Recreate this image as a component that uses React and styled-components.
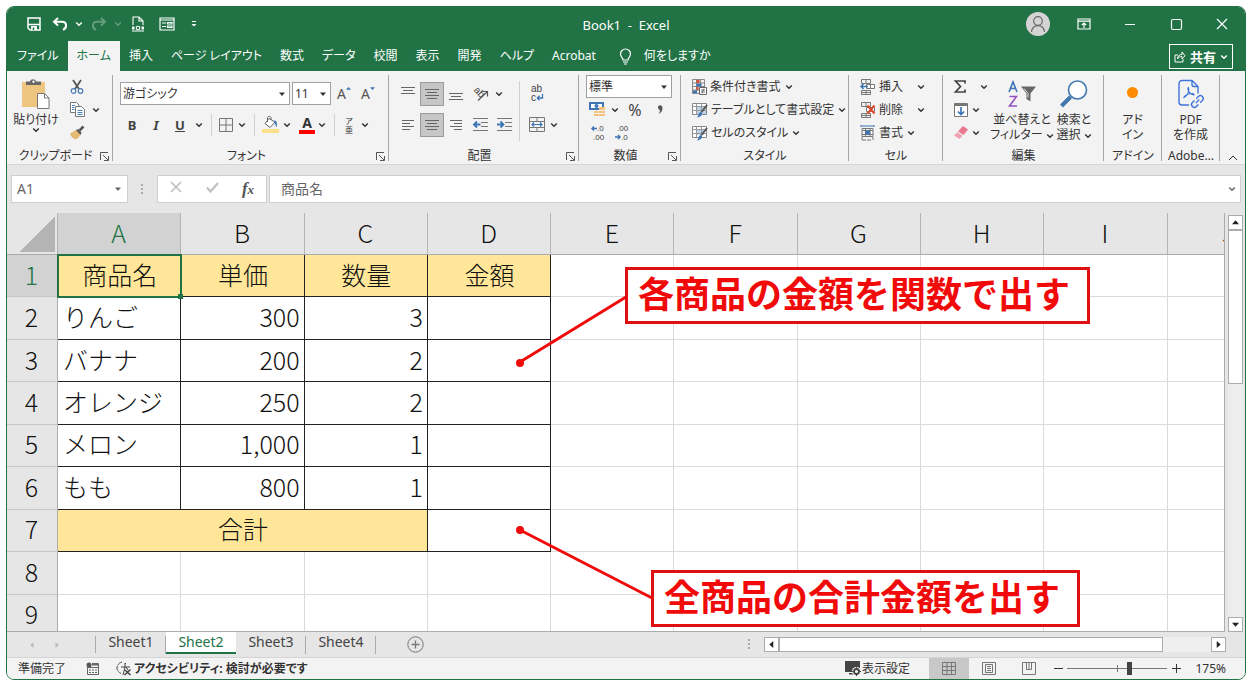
import styled, { createGlobalStyle, css } from "styled-components";

const tabs = [
  "ファイル",
  "ホーム",
  "挿入",
  "ページ レイアウト",
  "数式",
  "データ",
  "校閲",
  "表示",
  "開発",
  "ヘルプ",
  "Acrobat",
];

const columns = ["A", "B", "C", "D", "E", "F", "G", "H", "I", "J"];

const items = [
  { name: "りんご", price: "300", qty: "3" },
  { name: "バナナ", price: "200", qty: "2" },
  { name: "オレンジ", price: "250", qty: "2" },
  { name: "メロン", price: "1,000", qty: "1" },
  { name: "もも", price: "800", qty: "1" },
];

const sheets = ["Sheet1", "Sheet2", "Sheet3", "Sheet4"];

/* ================= ICONS ================= */

const Svg = ({ w = 16, h = w, children, ...rest }) => (
  <svg
    width={w}
    height={h}
    viewBox={`0 0 ${w} ${h}`}
    fill="none"
    stroke="currentColor"
    aria-hidden="true"
    {...rest}
  >
    {children}
  </svg>
);

const Chevron = () => (
  <Svg w={8} h={6} strokeWidth="1.4">
    <path d="M1.2 1.4 4 4.2 6.8 1.4" />
  </Svg>
);

const Triangle = ({ dir = "down", size = 7 }) => {
  const turn = { down: 0, left: 90, up: 180, right: 270 }[dir];
  return (
    <Svg w={size} viewBox="0 0 8 8" stroke="none">
      <path d="M0 2h8L4 6.5z" fill="currentColor" transform={`rotate(${turn} 4 4)`} />
    </Svg>
  );
};

const SaveIcon = () => (
  <Svg w={14} strokeWidth="1.5">
    <path d="M1 1h12v12H3L1 11z" />
    <path d="M1 7.500h12" />
    <path d="M4 9h6v4H4z" fill="currentColor" stroke="none" />
    <path d="M6.500 10.500V13" stroke="#217346" />
  </Svg>
);

const UndoIcon = ({ flip }) => (
  <Svg w={16} h={14} strokeWidth="2">
    <g transform={flip ? "matrix(-1 0 0 1 16 0)" : undefined}>
      <path d="M6 1 2 4.800l4 3.800M2.400 4.800H10c5 0 5.500 6 1 8" />
    </g>
  </Svg>
);

const PreviewIcon = () => (
  <Svg w={14} h={16} strokeWidth="1.1">
    <path d="M2 9V1h6l4 4v4M8 1v4h4M1 15h12" />
    <path d="M1 12h2.500M10.500 12H13" strokeWidth="3" />
    <circle cx="7" cy="12" r="1.800" />
  </Svg>
);

const FormIcon = () => (
  <Svg w={16} h={14} strokeWidth="1.2">
    <path d="M1 1h14v12H1zM1 3h14" />
    <path d="M3 6h4M3 9.500h4M8.500 5.500H13v1.500H8.500zM8.500 9H13v1.500H8.500z" />
  </Svg>
);

const CustomizeIcon = () => (
  <Svg w={8} h={8} strokeWidth="1">
    <path d="M2 1.500h4" />
    <path d="M1.500 4h5L4 6.500z" fill="currentColor" stroke="none" />
  </Svg>
);

const PersonIcon = () => (
  <Svg w={16} h={18} strokeWidth="1.2">
    <circle cx="8" cy="6" r="4.300" />
    <path d="M1.500 17c0-8.500 13-8.500 13 0" />
  </Svg>
);

const RibbonIcon = () => (
  <Svg w={14} h={12} strokeWidth="1.200">
    <path d="M1 1h12v10H1zM1 3.200h12M7 10V5.200M4.800 7 7 5l2.200 2" />
  </Svg>
);

const ShareIcon = () => (
  <Svg w={12} h={12} strokeWidth="1">
    <path d="M4 4H1v7h8V8" />
    <path d="M3.500 8c0-3 2-4.500 4.500-4.500V1l3 3.800-3 3V5.500c-2 0-3.500.5-4.500 2.500z" />
  </Svg>
);

const BulbIcon = () => (
  <Svg w={13} h={17} strokeWidth="1.200">
    <path d="M4 12c0-2.500-2.500-3-2.500-6a5 5 0 0 1 10 0c0 3-2.500 3.500-2.500 6zM4 14h5M5 16h3" />
  </Svg>
);

const PasteIcon = () => (
  <Svg w={28} h={30} strokeWidth="1">
    <path d="M0 3h23v25H0z" fill="#edc57f" stroke="none" />
    <path d="M4 6V2.500h4C8.500-.5 13.500-.5 14 2.500h5V6z" fill="#666" stroke="none" />
    <circle cx="11.500" cy="2.800" r="1.200" fill="#f3f3f3" stroke="none" />
    <path d="M15.500 14.500h7l4.500 4.500v10.500H15.500z" fill="#fff" stroke="#777" />
    <path d="M22.500 14.500V19H27" stroke="#777" />
  </Svg>
);

const CutIcon = () => (
  <Svg w={14} strokeWidth="1.200">
    <path d="M3 0 9 9M11 0 5 9" stroke="#555" strokeWidth="1.800" />
    <circle cx="3.500" cy="11" r="2.300" stroke="#4a7db5" />
    <circle cx="10.500" cy="11" r="2.300" stroke="#4a7db5" />
  </Svg>
);

const CopyIcon = () => (
  <Svg w={15} h={15} stroke="#777">
    <path d="M.5.5h6L9 3v7.500H.500z" fill="#fff" />
    <path d="M5.500 4.500h6l3 3v7h-9z" fill="#fff" />
    <path d="M2 3.500h3M2 5.500h2.500M2 7.500h2.500M7.500 8.500h5M7.500 10.500h5M7.500 12.500h5" stroke="#4a7db5" />
  </Svg>
);

const BrushIcon = () => (
  <Svg w={15} h={14} stroke="none">
    <path d="M0 7.500 6 4l5 4.500L7 13C4 13.500 1 11 0 7.500z" fill="#e5b972" />
    <path d="m6 4 2-1 3.500 3.500L10.500 9z" fill="#555" />
    <path d="m9.500 4.500 4-4" stroke="#555" strokeWidth="2.500" />
  </Svg>
);

const BordersIcon = () => (
  <Svg w={14} stroke="#777">
    <path d="M.5.5h13v13H.500zM7 .5v13M.5 7h13" />
  </Svg>
);

const FillIcon = () => (
  <Svg w={17} h={17}>
    <path d="M0 13h17v4H0z" fill="#fbe08c" stroke="none" />
    <path d="M7 2.500 3 7.500l5 4 5-5.500z" fill="#fff" stroke="#666" />
    <path d="M5.500 6V1.500C6 0 8.500 0 9 1.500V4" stroke="#666" />
    <path d="M12 4.500c3 0 3.500 3 2.500 7-1-2-1-4-2.500-5z" fill="#3d75b5" stroke="none" />
  </Svg>
);

const AlignIcon = ({ lines, w = 14, h = 14 }) => (
  <Svg w={w} h={h} stroke="#666" strokeWidth="1">
    {lines.map(([x1, x2, y]) => (
      <path key={y} d={`M${x1} ${y + 0.5}H${x2}`} />
    ))}
  </Svg>
);

const alignTop = [[0, 14, 0], [2, 12, 3], [0, 14, 6]];
const alignMid = [[0, 14, 2], [2, 12, 5], [0, 14, 8], [2, 12, 11]];
const alignBottom = [[0, 14, 7], [2, 12, 10], [0, 14, 13]];
const alignLeft = [[1, 13, 2], [1, 9, 5], [1, 13, 8], [1, 9, 11]];
const alignRight = [[1, 13, 2], [5, 13, 5], [1, 13, 8], [5, 13, 11]];

const RotateIcon = () => (
  <Svg w={17} h={16} stroke="#555">
    <IconText x="1" y="7" transform="rotate(45 4 6)">ab</IconText>
    <path d="M6 14.500 15 6M10.500 5.500h5v5" strokeWidth="1.200" />
  </Svg>
);

const IndentIcon = ({ out }) => (
  <Svg w={15} h={14}>
    <path d="M0 .5h15M8 4.500h7M8 8.500h7M0 12.500h15" stroke="#777" />
    <path
      d={out ? "M7.500 6.500H1M4 3.500l-3 3 3 3" : "M0 6.500h6.500M3.500 3.500l3 3-3 3"}
      stroke="#3d75b5"
      strokeWidth="1.800"
    />
  </Svg>
);

const WrapIcon = () => (
  <Svg w={14} h={17} stroke="#3d75b5">
    <IconText x="1" y="7">ab</IconText>
    <IconText x="1" y="16">c</IconText>
    <path d="M12.500 9v4H7.500M9.500 10.800 7.300 13l2.200 2.200" strokeWidth="1.300" />
  </Svg>
);

const MergeIcon = () => (
  <Svg w={16} h={15} stroke="#777">
    <path d="M.5.5h15v14H.500zM.5 4.500h15M.5 10.500h15M8 .5v4M8 10.500v4" />
    <path d="M3 7.500h10M5 5.500l-2 2 2 2M11 5.500l2 2-2 2" stroke="#3d75b5" strokeWidth="1.200" />
  </Svg>
);

const MoneyIcon = () => (
  <Svg w={16} h={15} stroke="none">
    <path d="M0 0h15v8H0z" fill="#3d75b5" />
    <path d="M2 2h11v4H2z" fill="#fff" />
    <circle cx="7.500" cy="4" r="2" fill="#3d75b5" />
    <path d="M10 5h6v3h-6zM10 9h6v2h-6zM10 12h6v2h-6zM5 9h4.500v2H5zM5 12h4.500v2H5z" fill="#f3c37e" />
  </Svg>
);

const CommaIcon = () => (
  <Svg w={6} h={9} stroke="none">
    <path d="M1 2.500C1-.5 5.500-.5 5.500 3c0 3-1.500 5-4 6 1-1.500 1.500-2.500 1.500-4C2 5 1 4 1 2.500z" fill="#555" />
  </Svg>
);

const DecimalIcon = ({ more }) => (
  <Svg w={14} h={15} stroke="#3d75b5" strokeWidth="1.500">
    <IconText x={more ? 6 : 2} y="6" $small>{more ? ".0" : ".00"}</IconText>
    <IconText x={more ? 2 : 6} y="15" $small>{more ? ".00" : ".0"}</IconText>
    <path d={more ? "M6 3.500H1M3 1.500l-2 2 2 2" : "M0 12h5M3 10l2 2-2 2"} />
  </Svg>
);

const CondIcon = () => (
  <Svg w={15} h={16}>
    <path d="M.5.5h12v14H.500zM.5 4h12M.5 7.500h12M.5 11h12M4.500.5v14M8.500.5v14" stroke="#888" />
    <path d="M4.500 1h3v3h-3zM4.500 8h2v3h-2z" fill="#d9492f" stroke="none" />
    <path d="M4.500 4.500h5v3h-5zM1 11.500h4V14H1z" fill="#3d75b5" stroke="none" />
    <path d="M7.500 8.500h7v7h-7z" fill="#fff" stroke="#666" />
    <path d="M9 11h4M9 13h4M12 9.500 10 14.500" stroke="#555" strokeWidth=".8" />
  </Svg>
);

const TableIcon = ({ solid }) => (
  <Svg w={16} h={16}>
    <path d="M.5 1.500h14v11H.500z" fill="#fff" stroke="#888" />
    <path d={solid ? "M4 4h8v6H4z" : "M4 4h10v8H4z"} fill="#bdd3ea" stroke="none" />
    <path d="M.5 4.500h14M.5 8.500h14M4.500 1.500v11M9.500 1.500v11" stroke="#999" />
    <path d="m15 3-5.500 7" stroke="#555" strokeWidth="2" />
    <path d="M4 15.500c3 0 2-5 4.500-5.500 3 1 1.500 5.500-4.500 5.500z" fill="#3d75b5" stroke="none" />
  </Svg>
);

const CellIcon = ({ kind }) => (
  <Svg w={16} h={16} stroke="#777">
    {kind === "format" ? (
      <>
        <path d="M2 3.500h11v8H2zM2 5.500h11M2 9.500h11M5.500 3.500v8M10 3.500v8M2 12v3h4M7 15h4M13 12v3" />
        <path d="M1 1h13M1 0v2M14 0v2" stroke="#3d75b5" />
        <path d="M5.500 5.500H10v4H5.500z" fill="#3d75b5" stroke="none" />
      </>
    ) : (
      <>
        <path d="M1.500.5h9v4h-9zM6 .5v4M1.500 11.500h9v4h-9zM6 11.500v4M1.500 13.500h9" />
        <path d="M6.500 5.500h8v4h-8zM10.500 5.500v4" fill="#fff" />
        {kind === "insert" ? (
          <path d="M8 7.500H1M3.500 5l-2.500 2.500L3.500 10" stroke="#3d75b5" strokeWidth="1.500" />
        ) : (
          <path d="m7.500 3.500 7 8M14.500 3.500l-7 8" stroke="#e0482b" strokeWidth="2" />
        )}
      </>
    )}
  </Svg>
);

const SigmaIcon = () => (
  <Svg w={12} h={13} stroke="#444" strokeWidth="1.700">
    <path d="M11 3.500V1H1.500L6.500 6.500 1.500 12H11V9.500" />
  </Svg>
);

const FillDownIcon = () => (
  <Svg w={14} h={14}>
    <path d="M.5.5h13v13H.500z" fill="#fff" stroke="#777" />
    <path d="M.5 2h13" stroke="#777" strokeWidth="2" />
    <path d="M7 4v7.500M3.800 8.500 7 11.500l3.200-3" stroke="#3d75b5" strokeWidth="1.700" />
  </Svg>
);

const EraserIcon = () => (
  <Svg w={14} h={13} stroke="none">
    <path d="M9 0 14 3.500 9.500 9 4 5.500z" fill="#e9788f" />
    <path d="M3.200 6.200 8.500 9.800 5.500 13 0 9.500z" fill="#f0a1b1" />
  </Svg>
);

const SortIcon = () => (
  <Svg w={28} h={27} strokeWidth="1.600">
    <path d="M1 11.500 5 1.500l4 10M2.500 8h5" stroke="#3d75b5" />
    <path d="M1.500 16h7l-7 9.500h7.500" stroke="#9353bd" />
    <path d="M13 6h15l-5.500 7v8l-4-2.500V13z" fill="#666" stroke="none" />
    <path d="m16 8 4 5v4" stroke="#ddd" strokeWidth="1" />
  </Svg>
);

const FindIcon = () => (
  <Svg w={28} h={28} stroke="#4178b0">
    <circle cx="17.500" cy="10" r="9" fill="#fff" strokeWidth="1.600" />
    <path d="M10.500 17 1.500 26" strokeWidth="4" />
  </Svg>
);

const PdfIcon = () => (
  <Svg w={26} h={29} stroke="#3f74d8" strokeWidth="1.400">
    <path d="M11 25.500H4A3 3 0 0 1 1 22.500V4A3 3 0 0 1 4 1h10l6 6v7" />
    <path d="M14 1v4c0 1.500.5 2 2 2h4" />
    <path
      d="M6 18c4-2 5.500-7 4.500-10-1.500 0-.5 6 5 7.500 1 0 .5-1.500-1-1.500-3 0-7 1.500-8.500 3.500z"
      strokeWidth="1.100"
    />
    <g transform="rotate(-45 19 22)">
      <path d="M18 19.500h-3a2.800 2.800 0 0 0 0 5.600h3M20.500 19.500h3a2.800 2.800 0 0 1 0 5.600h-3M17 22.300h5" />
    </g>
  </Svg>
);

const LaunchIcon = () => (
  <Svg w={9} h={9} stroke="#555">
    <path d="M.5 8V.5H8M3 3l5 5M8.500 4v4.500H4" />
  </Svg>
);

const MacroIcon = () => (
  <Svg w={13} h={13} stroke="#666">
    <path d="M1.500 3v9.500h11V1.500H6M1.500 5.500h11" />
    <path d="M6 2.500h6" strokeWidth="2" />
    <path d="M3 8h2M6 8h2M9 8h2M3 10.500h2M6 10.500h2M9 10.500h2" />
    <circle cx="3" cy="3" r="2.500" fill="#555" stroke="none" />
  </Svg>
);

const AccessIcon = () => (
  <Svg w={16} h={15} stroke="#444">
    <path d="M6 1C-.5 3-.5 10 5 12.500" strokeDasharray="5 1" />
    <path d="M5 6h9M9 2v4l-2 8M10 6l2 3M9 2.500h1" />
    <path d="m9 9 5.500 5M14.500 8.500 8.500 14" strokeWidth="1.600" />
  </Svg>
);

const DisplayIcon = () => (
  <Svg w={16} h={15} stroke="none">
    <path d="M0 0h15v7l-4 4H0zM4 12h5v1.500H4z" fill="#444" />
    <circle cx="11.500" cy="10.500" r="4.500" fill="#f3f3f3" />
    <circle cx="11.500" cy="10.500" r="2.500" stroke="#444" strokeWidth="1.800" />
    <path d="M11.500 6.200v2M11.500 13v2M7.200 10.500h2M14 10.500h2" stroke="#444" />
  </Svg>
);

const ViewIcon = ({ kind }) => (
  <Svg w={14} h={13} stroke="#777">
    <path d="M.5.5h13v12H.500z" />
    {kind === "normal" && <path d="M5 .5v12M9.500 .5v12M.5 4.500h13M.5 8.500h13" />}
    {kind === "page" && <path d="M3.500 2.500h7v8h-7zM5 4.500h4M5 6.500h4M5 8.500h4" />}
    {kind === "break" && <path d="M4.500.5v7h5v-7M7 .5v7" />}
  </Svg>
);

/* ================= PARTS ================= */

const Drop = ({ label }) => (
  <DropButton aria-label={label}>
    <Chevron />
  </DropButton>
);

const Group = ({ title, width, launcher, children }) => (
  <GroupBox $width={width}>
    <GroupBody>{children}</GroupBody>
    <GroupFoot>
      <span>{title}</span>
      {launcher && (
        <Launcher aria-label={`${title}の設定`}>
          <LaunchIcon />
        </Launcher>
      )}
    </GroupFoot>
  </GroupBox>
);

const Ribbon = () => (
  <RibbonBar>
    <Group title="クリップボード" width={106} launcher>
      <BigButton $width={58}>
        <PasteIcon />
        <span>貼り付け</span>
        <Chevron />
      </BigButton>
      <NarrowStack>
        <Row>
          <Tool $width={24} aria-label="切り取り"><CutIcon /></Tool>
        </Row>
        <Row>
          <Tool $width={24} aria-label="コピー"><CopyIcon /></Tool>
          <Drop label="コピーのオプション" />
        </Row>
        <Row>
          <Tool $width={24} aria-label="書式のコピー"><BrushIcon /></Tool>
        </Row>
      </NarrowStack>
    </Group>

    <Group title="フォント" width={276} launcher>
      <TwoRows>
        <Row $gap={2}>
          <SelectBox $width={170}>
            <select aria-label="フォント名"><option>游ゴシック</option></select>
            <Triangle size={6} />
          </SelectBox>
          <SelectBox $width={39}>
            <select aria-label="フォント サイズ"><option>11</option></select>
            <Triangle size={6} />
          </SelectBox>
          <SizeTool aria-label="フォント サイズの拡大">A<Triangle dir="up" size={5} /></SizeTool>
          <SizeTool aria-label="フォント サイズの縮小">A<Triangle size={5} /></SizeTool>
        </Row>
        <Row>
          <Tool $width={24} $bold>B</Tool>
          <Tool $width={24} $bold $italic>I</Tool>
          <Tool $width={24} $bold $underline>U</Tool>
          <Drop label="下線の種類" />
          <Divider />
          <Tool $width={18} aria-label="罫線"><BordersIcon /></Tool>
          <Drop label="罫線の種類" />
          <Divider />
          <Tool $width={20} aria-label="塗りつぶしの色"><FillIcon /></Tool>
          <Drop label="塗りつぶしの色を選ぶ" />
          <FontColor aria-label="フォントの色">A</FontColor>
          <Drop label="フォントの色を選ぶ" />
          <Divider />
          <Ruby aria-label="ふりがな"><span>ア</span><span>亜</span></Ruby>
          <Drop label="ふりがなの設定" />
        </Row>
      </TwoRows>
    </Group>

    <Group title="配置" width={190} launcher>
      <TwoRows>
        <Row>
          <Tool $width={24} aria-label="上揃え"><AlignIcon lines={alignTop} /></Tool>
          <Tool $width={24} $on aria-label="上下中央揃え"><AlignIcon lines={alignMid} /></Tool>
          <Tool $width={24} aria-label="下揃え"><AlignIcon lines={alignBottom} h={15} /></Tool>
          <Tool $width={24} aria-label="方向"><RotateIcon /></Tool>
          <Drop label="方向の種類" />
        </Row>
        <Row>
          <Tool $width={24} aria-label="左揃え"><AlignIcon lines={alignLeft} /></Tool>
          <Tool $width={24} $on aria-label="中央揃え"><AlignIcon lines={alignMid} /></Tool>
          <Tool $width={24} aria-label="右揃え"><AlignIcon lines={alignRight} /></Tool>
          <Tool $width={24} aria-label="インデントを減らす"><IndentIcon out /></Tool>
          <Tool $width={24} aria-label="インデントを増やす"><IndentIcon /></Tool>
        </Row>
      </TwoRows>
      <Divider $tall />
      <TwoRows>
        <Row>
          <Tool $width={20} aria-label="折り返して全体を表示する"><WrapIcon /></Tool>
        </Row>
        <Row>
          <Tool $width={20} aria-label="セルを結合して中央揃え"><MergeIcon /></Tool>
          <Drop label="結合の種類" />
        </Row>
      </TwoRows>
    </Group>

    <Group title="数値" width={102} launcher>
      <Stack>
        <Row>
          <SelectBox $width={86}>
            <select aria-label="数値の書式"><option>標準</option></select>
            <Triangle size={6} />
          </SelectBox>
        </Row>
        <Row>
          <Tool $width={22} aria-label="通貨表示形式"><MoneyIcon /></Tool>
          <Drop label="通貨の種類" />
          <Tool $width={26} $size={16}>%</Tool>
          <Tool $width={24} aria-label="桁区切りスタイル"><CommaIcon /></Tool>
        </Row>
        <Row>
          <Tool $width={24} aria-label="小数点以下の表示桁数を増やす"><DecimalIcon more /></Tool>
          <Tool $width={24} aria-label="小数点以下の表示桁数を減らす"><DecimalIcon /></Tool>
        </Row>
      </Stack>
    </Group>

    <Group title="スタイル" width={168}>
      <Stack>
        <TextTool><CondIcon />条件付き書式<Chevron /></TextTool>
        <TextTool><TableIcon />テーブルとして書式設定<Chevron /></TextTool>
        <TextTool><TableIcon solid />セルのスタイル<Chevron /></TextTool>
      </Stack>
    </Group>

    <Group title="セル" width={94}>
      <Stack>
        <TextTool $wide><CellIcon kind="insert" />挿入<Chevron /></TextTool>
        <TextTool $wide><CellIcon kind="delete" />削除<Chevron /></TextTool>
        <TextTool><CellIcon kind="format" />書式<Chevron /></TextTool>
      </Stack>
    </Group>

    <Group title="編集" width={161}>
      <Stack>
        <TextTool $wide><SigmaIcon /><Chevron /></TextTool>
        <TextTool><FillDownIcon /><Chevron /></TextTool>
        <TextTool><EraserIcon /><Chevron /></TextTool>
      </Stack>
      <BigButton $width={68}>
        <SortIcon />
        <span>並べ替えと</span>
        <span>フィルター <Chevron /></span>
      </BigButton>
      <BigButton $width={36}>
        <FindIcon />
        <span>検索と</span>
        <span>選択 <Chevron /></span>
      </BigButton>
    </Group>

    <Group title="アドイン" width={58}>
      <BigButton $width={57}>
        <Dot />
        <span>アド</span>
        <span>イン</span>
      </BigButton>
    </Group>

    <Group title="Adobe…" width={58}>
      <BigButton $width={57}>
        <PdfIcon />
        <span>PDF</span>
        <span>を作成</span>
      </BigButton>
    </Group>

    <Collapse aria-label="リボンを折りたたむ">
      <Svg w={10} h={6}><path d="M1 5 5 1l4 4" /></Svg>
    </Collapse>
  </RibbonBar>
);

const Blank = ({ count }) => Array.from({ length: count }, (_, i) => <Cell key={i} />);

const Grid = () => (
  <Viewport>
    <Table>
      <colgroup>
        <HeadCol />
        {columns.map((c) => <col key={c} />)}
      </colgroup>
      <thead>
        <tr>
          <Corner />
          {columns.map((c) => <ColHead key={c} $on={c === "A"}>{c}</ColHead>)}
        </tr>
      </thead>
      <tbody>
        <tr>
          <RowHead $on>1</RowHead>
          <Cell $boxed $gold $selected>商品名</Cell>
          <Cell $boxed $gold>単価</Cell>
          <Cell $boxed $gold>数量</Cell>
          <Cell $boxed $gold>金額</Cell>
          <Blank count={6} />
        </tr>
        {items.map((item, i) => (
          <tr key={item.name}>
            <RowHead>{i + 2}</RowHead>
            <Cell $boxed $align="left">{item.name}</Cell>
            <Cell $boxed $align="right">{item.price}</Cell>
            <Cell $boxed $align="right">{item.qty}</Cell>
            <Cell $boxed />
            <Blank count={6} />
          </tr>
        ))}
        <tr>
          <RowHead>7</RowHead>
          <Cell $boxed $gold colSpan={3}>合計</Cell>
          <Cell $boxed />
          <Blank count={6} />
        </tr>
        <tr>
          <RowHead>8</RowHead>
          <Blank count={10} />
        </tr>
        <tr>
          <RowHead>9</RowHead>
          <Blank count={10} />
        </tr>
      </tbody>
    </Table>
    <Leaders width="700" height="419" stroke="#f00a0a" fill="#f00a0a" aria-hidden="true">
      <path d="M513 149 619 84M513 317l132 68" strokeWidth="3" />
      <circle cx="513" cy="150" r="4" stroke="none" />
      <circle cx="513" cy="317" r="4" stroke="none" />
    </Leaders>
    <Callout $left={618} $top={54}>各商品の金額を関数で出す</Callout>
    <Callout $left={644} $top={357}>全商品の合計金額を出す</Callout>
  </Viewport>
);

const App = () => (
  <>
    <GlobalStyle />
    <Window>
      <TitleBar>
        <QuickTools>
          <TitleTool $width={26} aria-label="上書き保存"><SaveIcon /></TitleTool>
          <TitleTool $width={26} aria-label="元に戻す"><UndoIcon /></TitleTool>
          <TitleTool $width={12} aria-label="元に戻す履歴"><Chevron /></TitleTool>
          <TitleTool $width={28} $dim aria-label="やり直し"><UndoIcon flip /></TitleTool>
          <TitleTool $width={10} $dim aria-label="やり直し履歴"><Chevron /></TitleTool>
          <TitleTool $width={30} aria-label="印刷プレビュー"><PreviewIcon /></TitleTool>
          <TitleTool $width={28} aria-label="フォーム"><FormIcon /></TitleTool>
          <TitleTool $width={26} aria-label="カスタマイズ"><CustomizeIcon /></TitleTool>
        </QuickTools>
        <Title>Book1&nbsp; -&nbsp; Excel</Title>
        <WindowTools>
          <Avatar aria-label="アカウント"><PersonIcon /></Avatar>
          <TitleTool $width={46} aria-label="リボンの表示"><RibbonIcon /></TitleTool>
          <TitleTool $width={46} aria-label="最小化"><Svg w={10}><path d="M0 5.500h10" /></Svg></TitleTool>
          <TitleTool $width={46} aria-label="最大化">
            <Svg w={11}><rect x=".5" y=".5" width="10" height="10" rx="1.500" strokeWidth="1.200" /></Svg>
          </TitleTool>
          <TitleTool $width={46} aria-label="閉じる">
            <Svg w={12}><path d="m1 1 10 10M11 1 1 11" strokeWidth="1.200" /></Svg>
          </TitleTool>
        </WindowTools>
      </TitleBar>

      <TabBar>
        {tabs.map((tab) => <Tab key={tab} $on={tab === "ホーム"}>{tab}</Tab>)}
        <Tell><BulbIcon />何をしますか</Tell>
        <Share><ShareIcon />共有<Chevron /></Share>
      </TabBar>

      <Ribbon />

      <FormulaBar>
        <NameBox>
          <input aria-label="名前ボックス" defaultValue="A1" />
          <Triangle size={6} />
        </NameBox>
        <Grip />
        <FormulaTools>
          <button aria-label="キャンセル"><Svg w={12} strokeWidth="1.700"><path d="m1 1 10 10M11 1 1 11" /></Svg></button>
          <button aria-label="入力"><Svg w={13} h={11} strokeWidth="2.200"><path d="m1 5.500 3.500 4L12 1" /></Svg></button>
          <Fx aria-label="関数の挿入">f<sub>x</sub></Fx>
        </FormulaTools>
        <FormulaBox>
          <input aria-label="数式バー" defaultValue="商品名" />
          <Chevron />
        </FormulaBox>
      </FormulaBar>

      <Sheet>
        <Grid />
        <VScroll>
          <ScrollButton aria-label="上へ"><Triangle dir="up" /></ScrollButton>
          <VThumb />
          <ScrollButton aria-label="下へ"><Triangle /></ScrollButton>
        </VScroll>
      </Sheet>

      <SheetBar>
        <SheetNav>
          <button aria-label="前のシート"><Triangle dir="left" size={6} /></button>
          <button aria-label="次のシート"><Triangle dir="right" size={6} /></button>
        </SheetNav>
        {sheets.map((name) => <SheetTab key={name} $on={name === "Sheet2"}>{name}</SheetTab>)}
        <AddSheet aria-label="新しいシート">
          <Svg w={17} strokeWidth="1"><circle cx="8.500" cy="8.500" r="7.700" /><path d="M4.500 8.500h8M8.500 4.500v8" strokeWidth="1.300" /></Svg>
        </AddSheet>
        <Grip />
        <HScroll>
          <ScrollButton aria-label="左へ"><Triangle dir="left" /></ScrollButton>
          <HThumb />
          <ScrollButton aria-label="右へ"><Triangle dir="right" /></ScrollButton>
        </HScroll>
      </SheetBar>

      <StatusBar>
        <Ready>準備完了</Ready>
        <MacroIcon />
        <Access><AccessIcon />アクセシビリティ: 検討が必要です</Access>
        <Display><DisplayIcon />表示設定</Display>
        <ViewButton $on aria-label="標準"><ViewIcon kind="normal" /></ViewButton>
        <ViewButton aria-label="ページ レイアウト"><ViewIcon kind="page" /></ViewButton>
        <ViewButton aria-label="改ページ プレビュー"><ViewIcon kind="break" /></ViewButton>
        <ZoomButton aria-label="縮小"><Svg w={9}><path d="M0 4.500h9" /></Svg></ZoomButton>
        <Zoom type="range" aria-label="ズーム" min="0" max="100" defaultValue="63" />
        <ZoomButton aria-label="拡大"><Svg w={9}><path d="M0 4.500h9M4.500 0v9" /></Svg></ZoomButton>
        <Percent>175%</Percent>
      </StatusBar>
    </Window>
  </>
);

export default App;

/* ================= STYLES ================= */

const GlobalStyle = createGlobalStyle`
  * {
    box-sizing: border-box;
  }

  body {
    margin: 0;
    background: #fff;
    color: #333;
    font: 12px/16px "Noto Sans", "Noto Sans CJK JP", sans-serif;
    font-feature-settings: "palt";
  }

  button,
  input,
  select {
    margin: 0;
    padding: 0;
    border: 0;
    background: none;
    color: inherit;
    font: inherit;
    font-feature-settings: inherit;
  }

  svg {
    flex: none;
    overflow: visible;
  }
`;

const IconText = styled.text`
  fill: #444;
  stroke: none;
  font: ${(p) => (p.$small ? 8 : 10)}px "Liberation Sans", sans-serif;
`;

const Window = styled.div`
  display: flex;
  flex-direction: column;
  min-height: calc(100vh - 12px);
  margin: 6px;
  overflow: hidden;
  border: 1px solid #217346;
  border-radius: 8px;
  background: #e6e6e6;
`;

/* Title and tabs */
const TitleBar = styled.header`
  display: grid;
  grid-template-columns: 1fr auto 1fr;
  align-items: center;
  height: 34px;
  background: #217346;
  color: #fff;
`;

const QuickTools = styled.div`
  display: flex;
  padding-left: 14px;
`;

const Title = styled.div`
  padding-top: 2px;
  font-size: 13px;
`;

const WindowTools = styled.div`
  display: flex;
  align-items: center;
  justify-content: flex-end;
`;

const TitleTool = styled.button`
  display: flex;
  align-items: center;
  justify-content: center;
  width: ${(p) => p.$width}px;
  height: 24px;
  opacity: ${(p) => (p.$dim ? 0.3 : 1)};
`;

const Avatar = styled.button`
  display: flex;
  align-items: center;
  justify-content: center;
  width: 24px;
  height: 24px;
  margin-right: 11px;
  border-radius: 50%;
  background: #d4d4d4;
  color: #666;
`;

const TabBar = styled.nav`
  display: flex;
  align-items: stretch;
  height: 30px;
  padding: 0 12px 0 1px;
  background: #217346;
  color: #fff;
`;

const Tab = styled.button`
  padding: 0 9px;
  white-space: nowrap;

  ${(p) =>
    p.$on &&
    css`
      background: #f3f3f3;
      color: #217346;
    `}
`;

const Tell = styled.button`
  display: flex;
  align-items: center;
  gap: 12px;
  margin-left: 14px;
`;

const Share = styled.button`
  display: flex;
  align-items: center;
  gap: 4px;
  height: 25px;
  margin: 3px 0 0 auto;
  padding: 0 4px;
  border: 1px solid #fff;
  font-size: 13px;
  font-weight: 700;
`;

/* Ribbon */
const RibbonBar = styled.section`
  display: flex;
  height: 94px;
  padding: 4px 0 3px;
  border-bottom: 1px solid #d4d4d4;
  background: #f3f3f3;
`;

const GroupBox = styled.div`
  display: flex;
  flex: none;
  flex-direction: column;
  width: ${(p) => p.$width}px;
  border-right: 1px solid #a6a6a6;
`;

const GroupBody = styled.div`
  display: flex;
  flex: 1;
  min-height: 0;
`;

const GroupFoot = styled.div`
  display: flex;
  align-items: center;
  height: 10px;
  padding: 0 3px 0 4px;

  span {
    flex: 1;
    text-align: center;
    white-space: nowrap;
  }
`;

const Launcher = styled.button`
  display: flex;
  align-items: center;
`;

const Stack = styled.div`
  display: flex;
  flex-direction: column;
  padding-left: 7px;
`;

const NarrowStack = styled(Stack)`
  padding-left: 0;
`;

const TwoRows = styled.div`
  display: flex;
  flex-direction: column;
  gap: 8px;
  padding: 7px 0 0 7px;
`;

const Row = styled.div`
  display: flex;
  align-items: center;
  gap: ${(p) => p.$gap || 0}px;
  height: 23px;
`;

const Tool = styled.button`
  display: flex;
  align-items: center;
  justify-content: center;
  width: ${(p) => p.$width}px;
  height: 24px;
  border: 1px solid ${(p) => (p.$on ? "#9a9a9a" : "transparent")};
  background: ${(p) => (p.$on ? "#c6c6c6" : "none")};
  color: #444;
  font-size: ${(p) => p.$size || 13}px;
  font-weight: ${(p) => (p.$bold ? 700 : 400)};
  font-style: ${(p) => (p.$italic ? "italic" : "normal")};
  text-decoration: ${(p) => (p.$underline ? "underline" : "none")};
`;

const DropButton = styled.button`
  display: flex;
  align-items: center;
  justify-content: center;
  width: 14px;
  height: 22px;
`;

const SizeTool = styled.button`
  display: flex;
  justify-content: center;
  width: 22px;
  color: #555;
  font-size: 14px;

  svg {
    color: #3d75b5;
  }
`;

const FontColor = styled.button`
  width: 16px;
  height: 18px;
  margin-left: 5px;
  border-bottom: 4px solid #f00;
  font-size: 14px;
  font-weight: 700;
  line-height: 13px;
`;

const Ruby = styled.button`
  display: flex;
  flex-direction: column;
  align-items: center;
  width: 18px;
  font-size: 8px;
  line-height: 9px;
`;

const Divider = styled.div`
  flex: none;
  width: 1px;
  height: ${(p) => (p.$tall ? 60 : 22)}px;
  margin: ${(p) => (p.$tall ? "6px 0 0 3px" : "0 5px")};
  background: #d0d0d0;
`;

const SelectBox = styled.div`
  display: flex;
  align-items: center;
  width: ${(p) => p.$width}px;
  height: 23px;
  padding-right: 4px;
  border: 1px solid #a0a0a0;
  background: #fff;

  select {
    flex: 1;
    min-width: 0;
    height: 21px;
    padding-left: 2px;
    appearance: none;
  }
`;

const TextTool = styled.button`
  display: flex;
  align-items: center;
  gap: 3px;
  height: 23px;
  padding-left: 4px;
  white-space: nowrap;

  svg:last-child {
    margin-left: ${(p) => (p.$wide ? 11 : 1)}px;
  }
`;

const BigButton = styled.button`
  display: flex;
  flex-direction: column;
  align-items: center;
  width: ${(p) => p.$width}px;
  padding-top: 4px;
  line-height: 15px;
  white-space: nowrap;

  & > svg:first-child {
    height: 30px;
    margin-bottom: 3px;
  }
`;

const Dot = styled.div`
  width: 11px;
  height: 11px;
  margin: 8px 0 14px;
  border-radius: 50%;
  background: #ff8c00;
`;

const Collapse = styled.button`
  display: flex;
  flex: 1;
  align-items: flex-end;
  justify-content: center;
`;

/* Formula bar */
const FormulaBar = styled.div`
  display: flex;
  height: 48px;
  padding: 10px 4px;
  color: #666;
`;

const field = css`
  display: flex;
  align-items: center;
  border: 1px solid #cfcfcf;
  background: #fff;

  input {
    flex: 1;
    min-width: 0;
    outline: 0;
  }
`;

const NameBox = styled.div`
  ${field}
  width: 117px;
  padding: 0 6px 0 5px;
  font-size: 14px;
`;

const Grip = styled.div`
  align-self: center;
  width: 2px;
  height: 11px;
  margin: 0 14px 0 13px;
  background: repeating-linear-gradient(#aaa 0 2px, transparent 2px 4px);
`;

const FormulaTools = styled.div`
  ${field}
  width: 110px;

  button {
    flex: 1;
    color: #c0c0c0;
  }
`;

const Fx = styled.button`
  && {
    color: #555;
    font: italic 700 17px/16px "Liberation Serif", serif;
  }

  sub {
    font-size: 13px;
    line-height: 0;
    vertical-align: baseline;
  }
`;

const FormulaBox = styled.div`
  ${field}
  flex: 1;
  margin-left: 2px;
  padding: 0 4px 0 11px;
  font-size: 14px;
`;

/* Sheet */
const Sheet = styled.main`
  display: flex;
  flex: 1;
  min-height: 0;
`;

const Viewport = styled.div`
  position: relative;
  flex: 1;
  min-width: 0;
  height: 419px;
  overflow: hidden;
  border-right: 1px solid #ababab;
  border-bottom: 1px solid #ababab;
`;

const Table = styled.table`
  width: 1284px;
  height: 424px;
  table-layout: fixed;
  border-spacing: 0;
  color: #111;
  font: 300 25px/30px "Noto Sans CJK JP", sans-serif;
  font-feature-settings: normal;
`;

const HeadCol = styled.col`
  width: 51px;
`;

const ColHead = styled.th`
  height: 42px;
  padding: 0 1px 4px 0;
  border-right: 1px solid #b4b4b4;
  border-bottom: 1px solid #ababab;
  background: ${(p) => (p.$on ? "#d2d2d2" : "#e6e6e6")};
  color: ${(p) => (p.$on ? "#217346" : "#111")};
  font-weight: 300;
`;

const RowHead = styled(ColHead)`
  border-right-color: #ababab;
  border-bottom-color: #c6c6c6;
`;

const Corner = styled.td`
  padding: 0;
  border-right: 1px solid #b4b4b4;
  border-bottom: 1px solid #ababab;
  background: linear-gradient(to bottom right, transparent 50%, #b4b4b4 50%) 12px 4px / 36px 35px
    no-repeat #e6e6e6;
`;

const Cell = styled.td`
  position: relative;
  height: 42px;
  padding: 0 4px 4px 5px;
  border-right: 1px solid ${(p) => (p.$boxed ? "#222" : "#dadada")};
  border-bottom: 1px solid ${(p) => (p.$boxed ? "#222" : "#dadada")};
  background: ${(p) => (p.$gold ? "#ffe699" : "#fff")};
  text-align: ${(p) => p.$align || "center"};
  white-space: nowrap;

  ${(p) =>
    p.$selected &&
    css`
      &::before {
        content: "";
        position: absolute;
        inset: -1px -2px -2px -1px;
        z-index: 1;
        border: 2px solid #217346;
      }

      &::after {
        content: "";
        position: absolute;
        right: -3px;
        bottom: -3px;
        z-index: 1;
        width: 5px;
        height: 5px;
        background: #217346;
      }
    `}
`;

/* Callouts float over the cells */
const Leaders = styled.svg`
  position: absolute;
  top: 0;
  left: 0;
`;

const Callout = styled.div`
  position: absolute;
  top: ${(p) => p.$top}px;
  left: ${(p) => p.$left}px;
  padding: 0 17px 6px 10px;
  border: 3px solid #e01010;
  background: #fff;
  color: #f00a0a;
  font: 700 36px/45px "Noto Sans CJK JP", sans-serif;
  font-feature-settings: normal;
  white-space: nowrap;
`;

/* Scroll bars */
const ScrollButton = styled.button`
  display: flex;
  flex: none;
  align-items: center;
  justify-content: center;
  width: 15px;
  height: 15px;
  border: 1px solid #ababab;
  background: #fff;
  color: #222;
`;

const VScroll = styled.div`
  display: flex;
  flex-direction: column;
  justify-content: space-between;
  width: 15px;
  margin: 2px 2px 0 3px;
  background: #ededed;
`;

const VThumb = styled.div`
  width: 15px;
  height: 154px;
  margin-bottom: auto;
  border: 1px solid #ababab;
  background: #fff;
`;

const SheetBar = styled.div`
  display: flex;
  height: 25px;
`;

const SheetNav = styled.div`
  display: flex;
  align-items: center;
  gap: 19px;
  width: 89px;
  margin: 4px 0;
  padding-left: 22px;
  border-right: 1px solid #ababab;
  color: #bbb;

  button {
    display: flex;
  }
`;

const SheetTab = styled.button`
  width: 70px;
  height: 22px;
  border-bottom: 2px solid transparent;
  background: linear-gradient(#ababab, #ababab) right 4px / 1px 18px no-repeat;
  color: #444;
  font-size: 14px;

  ${(p) =>
    p.$on &&
    css`
      border-color: #217346;
      background: #fff;
      color: #217346;
    `}
`;

const AddSheet = styled.button`
  display: flex;
  align-items: center;
  margin: 0 auto 0 31px;
  color: #777;
`;

const HScroll = styled.div`
  display: flex;
  align-self: center;
  width: 462px;
  margin-right: 19px;
  background: #efefef;
`;

const HThumb = styled.div`
  flex: 0 1 384px;
  height: 15px;
  margin-right: auto;
  border: 1px solid #ababab;
  background: #fff;
`;

/* Status bar */
const StatusBar = styled.footer`
  display: flex;
  align-items: center;
  height: 22px;
  padding: 0 19px 0 11px;
  border-top: 1px solid #d4d4d4;
  background: #f3f3f3;
`;

const Ready = styled.span`
  width: 68px;
`;

const Access = styled.button`
  display: flex;
  align-items: center;
  gap: 2px;
  margin: 0 auto 0 17px;
  font-weight: 700;
`;

const Display = styled.button`
  display: flex;
  align-items: center;
  gap: 1px;
  margin-right: 19px;
`;

const ViewButton = styled.button`
  display: flex;
  align-items: center;
  justify-content: center;
  width: 40px;
  height: 21px;
  background: ${(p) => (p.$on ? "#c8c8c8" : "none")};
`;

const ZoomButton = styled.button`
  display: flex;
  margin: 0 4px 0 5px;
`;

const Zoom = styled.input`
  width: 100px;
  height: 15px;
  appearance: none;
  background:
    linear-gradient(#777, #777) center / 100% 1px no-repeat,
    linear-gradient(#777, #777) center / 1px 7px no-repeat;

  &::-webkit-slider-thumb {
    width: 5px;
    height: 13px;
    appearance: none;
    background: #444;
  }
`;

const Percent = styled.span`
  width: 34px;
  margin-left: 7px;
  text-align: right;
`;
